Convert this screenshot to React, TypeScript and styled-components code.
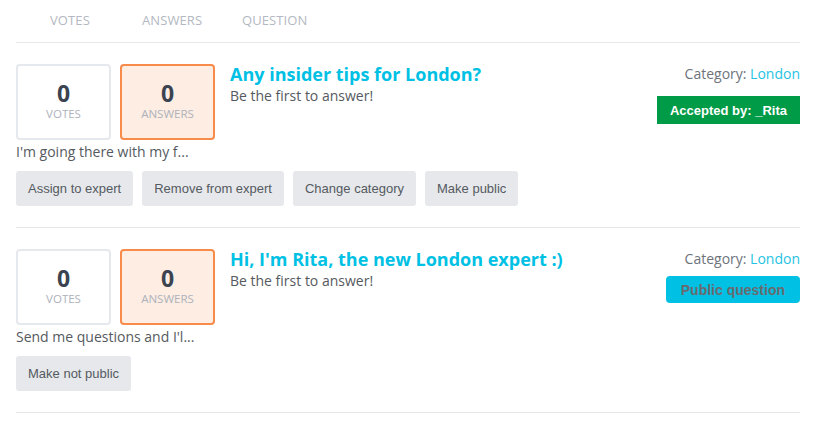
import React from "react";
import styled, { createGlobalStyle } from "styled-components";

const GlobalStyle = createGlobalStyle`
  html, body {
    margin: 0;
    padding: 0;
    background: #ffffff;
  }
  body {
    font-family: "Open Sans", "Liberation Sans", sans-serif;
  }
`;

type Question = {
  title: string;
  excerpt: string;
  votes: number;
  answers: number;
  category: string;
  badge: { kind: "accepted" | "public"; text: string };
  actions: string[];
};

const questions: Question[] = [
  {
    title: "Any insider tips for London?",
    excerpt: "I'm going there with my f...",
    votes: 0,
    answers: 0,
    category: "London",
    badge: { kind: "accepted", text: "Accepted by: _Rita" },
    actions: ["Assign to expert", "Remove from expert", "Change category", "Make public"]
  },
  {
    title: "Hi, I'm Rita, the new London expert :)",
    excerpt: "Send me questions and I'l...",
    votes: 0,
    answers: 0,
    category: "London",
    badge: { kind: "public", text: "Public question" },
    actions: ["Make not public"]
  }
];

export default function App() {
  return (
    <>
      <GlobalStyle />
      <Page>
        <ListHeader>
          <HeaderCell $width={92}>VOTES</HeaderCell>
          <HeaderCell $width={100}>ANSWERS</HeaderCell>
          <HeaderCell>QUESTION</HeaderCell>
        </ListHeader>
        {questions.map((q) => (
          <QuestionRow key={q.title}>
            <TopLine>
              <StatBox>
                <StatNumber>{q.votes}</StatNumber>
                <StatLabel>VOTES</StatLabel>
              </StatBox>
              <StatBox $highlight>
                <StatNumber>{q.answers}</StatNumber>
                <StatLabel>ANSWERS</StatLabel>
              </StatBox>
              <Summary>
                <Title>{q.title}</Title>
                <SubText>Be the first to answer!</SubText>
              </Summary>
              <Meta>
                <Category>
                  Category: <CategoryLink>{q.category}</CategoryLink>
                </Category>
                <Badge $kind={q.badge.kind}>{q.badge.text}</Badge>
              </Meta>
            </TopLine>
            <Excerpt>{q.excerpt}</Excerpt>
            <Actions>
              {q.actions.map((a) => (
                <ActionButton key={a}>{a}</ActionButton>
              ))}
            </Actions>
          </QuestionRow>
        ))}
      </Page>
    </>
  );
}

const Page = styled.div`
  width: 784px;
  margin-left: 16px;
`;

const ListHeader = styled.div`
  display: flex;
  align-items: center;
  box-sizing: border-box;
  height: 43px;
  padding-left: 34px;
  padding-bottom: 2px;
  border-bottom: 1px solid #e6e8eb;
`;

const HeaderCell = styled.div<{ $width?: number }>`
  width: ${(p) => (p.$width ? `${p.$width}px` : "auto")};
  font-size: 13px;
  color: #b3b8c2;
  letter-spacing: 0.1px;
`;

const QuestionRow = styled.div`
  padding: 21px 0 21px;
  border-bottom: 1px solid #e6e8eb;
`;

const TopLine = styled.div`
  display: flex;
  align-items: flex-start;
`;

const StatBox = styled.div<{ $highlight?: boolean }>`
  width: 95px;
  height: 76px;
  box-sizing: border-box;
  border: 2px solid ${(p) => (p.$highlight ? "#f88a4a" : "#e5e8ec")};
  background: ${(p) => (p.$highlight ? "#fdede2" : "#ffffff")};
  border-radius: 4px;
  margin-right: 9px;
  display: flex;
  flex-direction: column;
  align-items: center;
  padding-top: 14px;
`;

const StatNumber = styled.div`
  font-size: 23px;
  font-weight: 700;
  line-height: 26px;
  color: #3b4350;
`;

const StatLabel = styled.div`
  font-size: 11.5px;
  line-height: 13px;
  color: #adb2bc;
  margin-top: 1px;
`;

const Summary = styled.div`
  flex: 1;
  padding-left: 6px;
`;

const Title = styled.div`
  font-size: 18px;
  font-weight: 700;
  line-height: 22px;
  color: #00c1e4;
  margin-top: -1px;
`;

const SubText = styled.div`
  font-size: 14px;
  line-height: 20px;
  color: #555a60;
  margin-top: 1px;
`;

const Meta = styled.div`
  display: flex;
  flex-direction: column;
  align-items: flex-end;
`;

const Category = styled.div`
  font-size: 14px;
  line-height: 20px;
  color: #6e737c;
`;

const CategoryLink = styled.span`
  color: #1fc3e3;
`;

const Badge = styled.div<{ $kind: "accepted" | "public" }>`
  margin-top: ${(p) => (p.$kind === "accepted" ? "12px" : "7px")};
  height: ${(p) => (p.$kind === "accepted" ? "28px" : "27px")};
  padding: 0 ${(p) => (p.$kind === "accepted" ? "13px" : "15px")};
  display: flex;
  align-items: center;
  font-family: "Liberation Sans", Arial, sans-serif;
  font-size: ${(p) => (p.$kind === "accepted" ? "13px" : "14px")};
  font-weight: 700;
  background: ${(p) => (p.$kind === "accepted" ? "#009b47" : "#00c1e4")};
  color: ${(p) => (p.$kind === "accepted" ? "#ffffff" : "#6a6a6f")};
  border-radius: ${(p) => (p.$kind === "accepted" ? "0" : "4px")};
`;

const Excerpt = styled.div`
  font-size: 14px;
  line-height: 20px;
  color: #555a60;
  margin-top: 2px;
`;

const Actions = styled.div`
  display: flex;
  gap: 9px;
  margin-top: 9px;
`;

const ActionButton = styled.button`
  height: 35px;
  padding: 0 12px;
  border: none;
  border-radius: 3px;
  background: #e6e8ec;
  font-family: "Liberation Sans", Arial, sans-serif;
  font-size: 13px;
  color: #555a60;
  cursor: pointer;
`;
